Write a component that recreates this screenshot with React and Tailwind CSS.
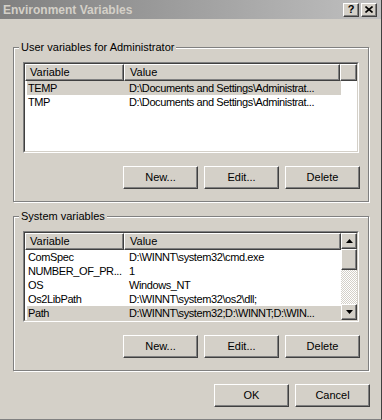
import React from "react";

// Win2000 style bevels
const raised =
  "border border-t-white border-l-white border-r-[#404040] border-b-[#404040] shadow-[inset_-1px_-1px_0_#808080]";

function Button({ children }) {
  return (
    <button className={`w-[75px] h-[23px] bg-[#d4d0c8] flex items-center justify-center leading-none ${raised}`}>
      {children}
    </button>
  );
}

function Group({ label, className = "", children }) {
  return (
    <fieldset
      className={`border border-[#808080] shadow-[1px_1px_0_#fff,inset_1px_1px_0_#fff] px-[9px] pt-[8px] pb-[12px] ${className}`}
    >
      <legend className="ml-[-4px] px-[2px] bg-[#d4d0c8] leading-[13px]">{label}</legend>
      {children}
    </fieldset>
  );
}

function Sunken({ children }) {
  return (
    <div className="h-[91px] border border-t-[#808080] border-l-[#808080] border-r-white border-b-white">
      <div className="h-full border border-t-[#404040] border-l-[#404040] border-r-[#d4d0c8] border-b-[#d4d0c8] bg-white flex overflow-hidden">
        {children}
      </div>
    </div>
  );
}

function HeaderCell({ className = "", children }) {
  return (
    <div className={`h-[17px] bg-[#d4d0c8] flex items-center whitespace-nowrap ${raised} ${className}`}>
      {children}
    </div>
  );
}

function Rows({ rows }) {
  return rows.map((r) => (
    <div
      key={r.name}
      className={`ml-[2px] w-[314px] h-[14px] flex items-center whitespace-nowrap overflow-hidden tracking-[-0.4px] ${
        r.selected ? "bg-[#d4d0c8]" : ""
      }`}
    >
      <div className="w-[98px] pl-[1px] overflow-hidden">{r.name}</div>
      <div className="flex-1 pl-[4px] overflow-hidden">{r.value}</div>
    </div>
  ));
}

function Arrow({ up }) {
  return (
    <svg width="7" height="4" viewBox="0 0 7 4">
      {up ? <path d="M3.5 0 L7 4 L0 4 Z" fill="#000" /> : <path d="M0 0 L7 0 L3.5 4 Z" fill="#000" />}
    </svg>
  );
}

const userRows = [
  { name: "TEMP", value: "D:\\Documents and Settings\\Administrat...", selected: true },
  { name: "TMP", value: "D:\\Documents and Settings\\Administrat..." },
];

const sysRows = [
  { name: "ComSpec", value: "D:\\WINNT\\system32\\cmd.exe" },
  { name: "NUMBER_OF_PR...", value: "1" },
  { name: "OS", value: "Windows_NT" },
  { name: "Os2LibPath", value: "D:\\WINNT\\system32\\os2\\dll;" },
  { name: "Path", value: "D:\\WINNT\\system32;D:\\WINNT;D:\\WIN...", selected: true },
];

export default function App() {
  return (
    <div className="w-[382px] h-[420px] bg-[#d4d0c8] flex flex-col border-r border-r-[#404040] border-b border-b-[#808080] text-[11px] text-black overflow-hidden font-['Liberation_Sans',Arial,sans-serif]">
      {/* title bar (inactive) */}
      <div className="h-[19px] shrink-0 flex items-center pl-[3px] pr-[4px] bg-linear-to-r from-[#808080] to-[#c0c0c0]">
        <span className="flex-1 font-bold text-[12px] text-[#d4d0c8] leading-none">Environment Variables</span>
        <div className="flex gap-[2px]">
          <div className={`w-[16px] h-[14px] bg-[#d4d0c8] flex items-center justify-center font-bold leading-none ${raised}`}>
            ?
          </div>
          <div className={`w-[16px] h-[14px] bg-[#d4d0c8] flex items-center justify-center ${raised}`}>
            <svg width="8" height="7" viewBox="0 0 8 7">
              <path d="M0.5 0.5 L7.5 6.5 M7.5 0.5 L0.5 6.5" stroke="#000" strokeWidth="1.6" />
            </svg>
          </div>
        </div>
      </div>

      {/* body */}
      <div className="flex flex-col pl-[13px] pr-[12px] pt-[22px]">
        <Group label="User variables for Administrator">
          <Sunken>
            <div className="flex-1 flex flex-col">
              <div className="flex">
                <HeaderCell className="w-[99px] pl-[4px]">Variable</HeaderCell>
                <HeaderCell className="w-[216px] pl-[5px]">Value</HeaderCell>
                <HeaderCell className="flex-1" />
              </div>
              <Rows rows={userRows} />
            </div>
          </Sunken>
          <div className="mt-[13px] flex justify-end gap-[6px] mr-[-1px]">
            <Button>New...</Button>
            <Button>Edit...</Button>
            <Button>Delete</Button>
          </div>
        </Group>

        <Group label="System variables" className="mt-[8px]">
          <Sunken>
            <div className="flex-1 flex flex-col">
              <div className="flex">
                <HeaderCell className="w-[99px] pl-[4px]">Variable</HeaderCell>
                <HeaderCell className="flex-1 pl-[5px]">Value</HeaderCell>
              </div>
              <Rows rows={sysRows} />
            </div>
            {/* scrollbar */}
            <div className="w-[16px] flex flex-col">
              <div className={`h-[16px] bg-[#d4d0c8] flex items-center justify-center ${raised}`}>
                <Arrow up />
              </div>
              <div className={`h-[21px] bg-[#d4d0c8] ${raised}`} />
              <div className="flex-1 [background:repeating-conic-gradient(#d4d0c8_0%_25%,#ffffff_0%_50%)_0_0/2px_2px]" />
              <div className={`h-[16px] bg-[#d4d0c8] flex items-center justify-center ${raised}`}>
                <Arrow />
              </div>
            </div>
          </Sunken>
          <div className="mt-[13px] flex justify-end gap-[6px] mr-[-1px]">
            <Button>New...</Button>
            <Button>Edit...</Button>
            <Button>Delete</Button>
          </div>
        </Group>

        <div className="mt-[13px] flex justify-end gap-[6px] mr-[-1px]">
          <Button>OK</Button>
          <Button>Cancel</Button>
        </div>
      </div>
    </div>
  );
}
